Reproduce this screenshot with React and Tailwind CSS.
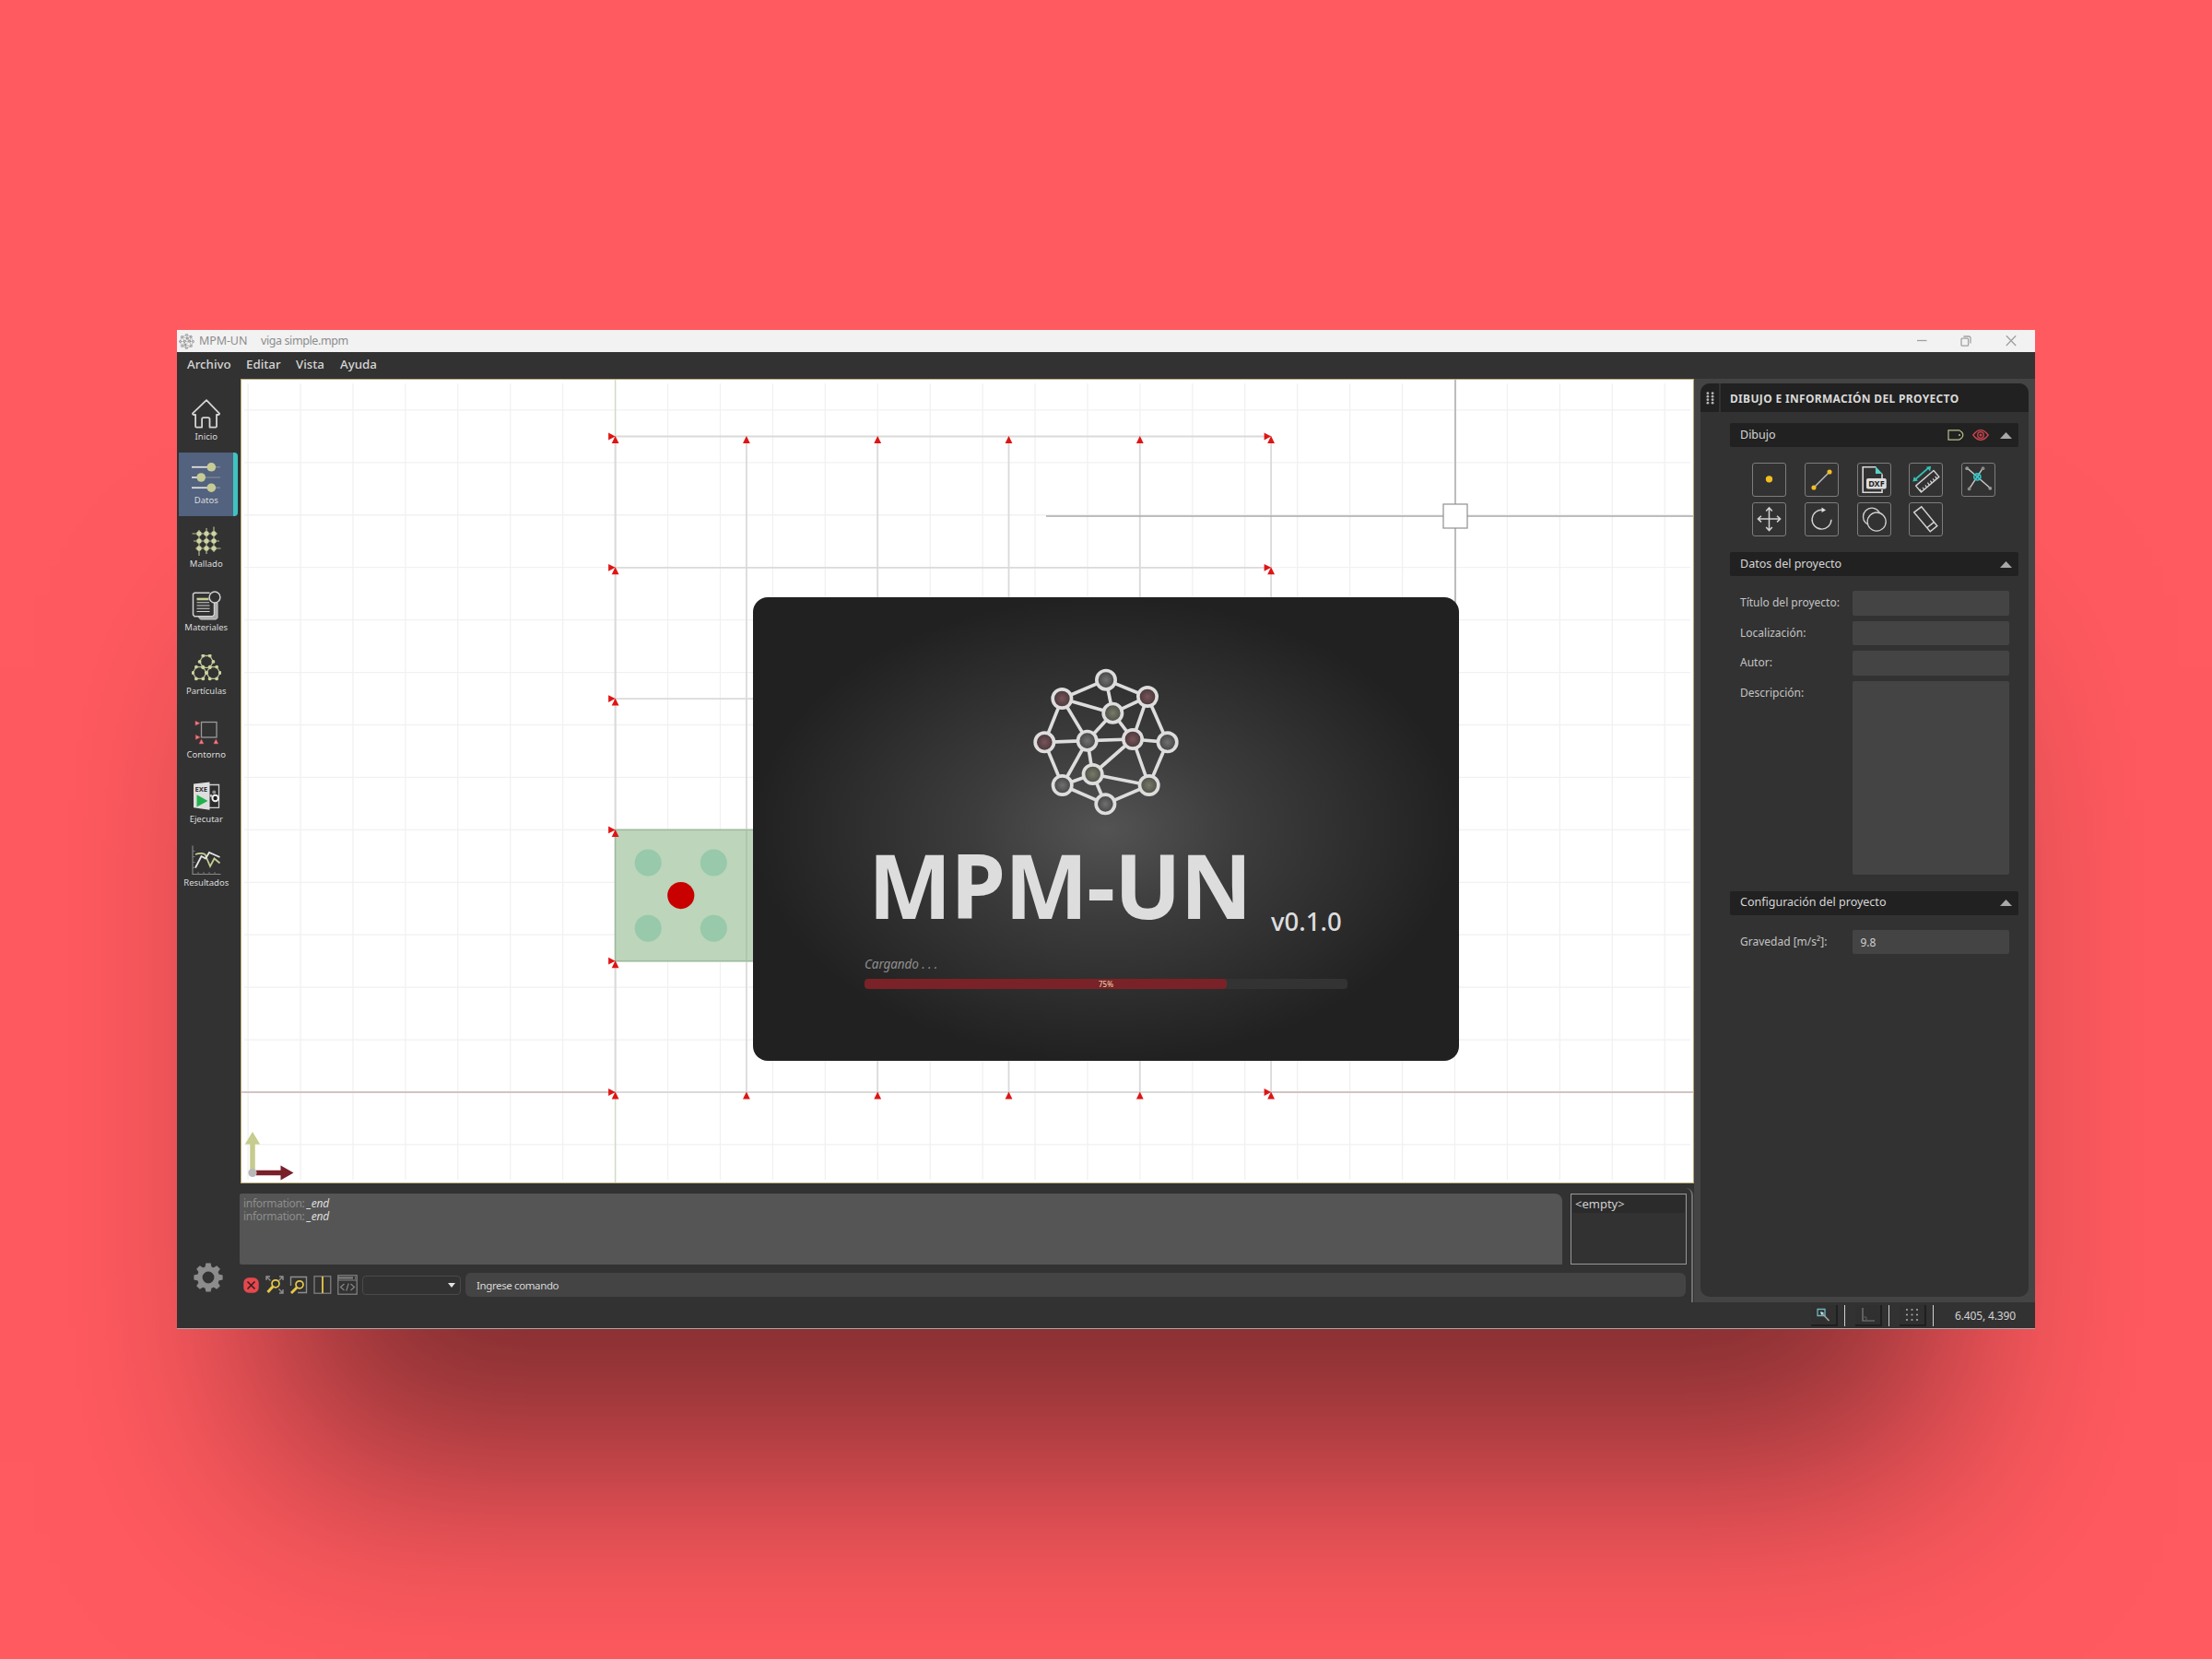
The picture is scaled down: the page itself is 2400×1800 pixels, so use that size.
import React from "react";

const X0 = 667.6 - 262;
const Y0 = 1185 - 412;
const MINOR = 56.93;
const MAJOR = 142.3;

const LOGO_NODES = {
  t: [300, 83, "g"],
  ur: [435, 138, "r"],
  r: [500, 286, "g"],
  br: [440, 426, "y"],
  b: [298, 487, "g"],
  bl: [158, 426, "g"],
  l: [100, 286, "r"],
  ul: [157, 144, "r"],
  a: [322, 191, "y"],
  c: [239, 281, "g"],
  d: [387, 276, "r"],
  e: [257, 390, "y"],
};
const LOGO_EDGES = [
  "t-ul", "t-ur", "ur-r", "r-br", "br-b", "b-bl", "bl-l", "l-ul", "t-a", "ul-a", "a-ur", "ul-c", "a-c",
  "a-d", "ur-d", "l-c", "c-d", "d-r", "c-bl", "c-e", "d-e", "d-br", "e-bl", "e-br", "e-b",
];

function Logo({ className, line, gray, red, olive, center }) {
  const fills = { g: gray, r: red, y: olive };
  const id = `${gray.slice(1)}glow`;
  return (
    <svg viewBox="60 45 480 480" className={className}>
      <defs>
        {Object.entries(fills).map(([k, f]) => (
          <radialGradient key={k} id={id + k}>
            <stop offset="0" stopColor={center[k]} />
            <stop offset="1" stopColor={f} />
          </radialGradient>
        ))}
      </defs>
      {LOGO_EDGES.map((e) => {
        const [p, q] = e.split("-").map((k) => LOGO_NODES[k]);
        return <line key={e} x1={p[0]} y1={p[1]} x2={q[0]} y2={q[1]} stroke={line} strokeWidth="11" />;
      })}
      {Object.entries(LOGO_NODES).map(([k, [x, y, f]]) => (
        <circle key={k} cx={x} cy={y} r="30.5" fill={`url(#${id + f})`} stroke={line} strokeWidth="11" />
      ))}
    </svg>
  );
}

function TitleBar() {
  return (
    <div className="flex h-6 items-center bg-[#f2f2f2] text-[12.5px] text-[#8c8c8c]">
      <Logo
        className="ml-[2px] size-[17px]"
        line="#666666"
        gray="#b4b4b3"
        red="#a9a9a8"
        olive="#acaca6"
        center={{ g: "#dddddd", r: "#cccccc", y: "#cccccc" }}
      />
      <span className="ml-[5px] w-[67px] tracking-[-0.1px]">MPM-UN</span>
      <span className="tracking-[-0.4px]">viga simple.mpm</span>
      <div className="ml-auto flex items-center pr-[20px] text-[#a0a0a0]">
        <svg viewBox="0 0 12 12" className="mr-[36px] size-[12px]" fill="none" stroke="currentColor" strokeWidth="1.3">
          <path d="M1 5.5h10.5" />
        </svg>
        <svg viewBox="0 0 12 12" className="mr-[37px] size-[12px]" fill="none" stroke="currentColor" strokeWidth="1.3">
          <rect x="1" y="3.2" width="7.6" height="8" rx="1" />
          <path d="M3.4 1H9a2 2 0 0 1 2 2v5.6" />
        </svg>
        <svg viewBox="0 0 12 12" className="size-[12px]" fill="none" stroke="currentColor" strokeWidth="1.3">
          <path d="M.8.2l10.400 10.800M11.200.2L.8 11" />
        </svg>
      </div>
    </div>
  );
}

function MenuBar() {
  return (
    <div className="flex h-[29px] items-start bg-[#323232] pl-[11px] pt-[3px] text-[13.3px] leading-5 font-medium text-[#d6d6d6]">
      <span className="w-[64px]">Archivo</span>
      <span className="w-[54px]">Editar</span>
      <span className="w-[48px]">Vista</span>
      <span>Ayuda</span>
    </div>
  );
}

function HomeIcon() {
  return (
    <svg viewBox="0 0 32 32" className="size-8" fill="none" stroke="#d4d4d4" strokeWidth="1.8" strokeLinejoin="round">
      <path d="M16 1.2L1.2 15.4c-.5.6 0 1.6.9 1.6h2v12.6c0 .6.4 1 1 1h6V21.8c0-1 .6-1.6 1.6-1.6h5.200c1 0 1.600.6 1.600 1.600v8.800h6.500c.6 0 1-.4 1-1V17h2c.9 0 1.400-1 .8-1.600z" />
    </svg>
  );
}

function SlidersIcon() {
  return (
    <svg viewBox="0 0 32 32" className="size-8">
      {[[4.8, 21.3], [16, 10.2], [27.200, 21.3]].map(([y, x]) => (
        <g key={y}>
          <path d={`M0 ${y}H${x}`} stroke="#dedede" strokeWidth="1.800" />
          <path d={`M${x} ${y}H31`} stroke="#7c8590" strokeWidth="1.4" />
          <circle cx={x} cy={y} r="4.8" fill="#c6cc94" />
        </g>
      ))}
    </svg>
  );
}

function MeshIcon() {
  const c = [8, 16, 24];
  return (
    <svg viewBox="0 0 32 32" className="size-8">
      <g stroke="#b4b890" strokeWidth="1.2">
        <path d="M.5 8H28M2 16h28M4 24h27.500M8 4v28M16 2v28M24 .5V28" />
      </g>
      {c.map((x) => c.map((y) => <circle key={`${x}-${y}`} cx={x} cy={y} r="2.7" fill="#ced3a2" />))}
    </svg>
  );
}

function MaterialsIcon() {
  return (
    <svg viewBox="0 0 32 32" className="size-8" fill="none" stroke="#d0d0d0" strokeWidth="1.5">
      <path d="M24.500 12l3.500 1v16.500l-1.500 1.500H9.500l-3-3.500" fill="#a9a9a9" strokeWidth="1" />
      <path d="M19.500 2.200H3L1.500 3.600V26L3 27.700h19.500l2-1.700V12.800" fill="#323232" />
      <path d="M5.500 9h13" stroke="#c6cc94" strokeWidth="2.600" />
      <path d="M5.500 12.800h13.500M5.500 16h14M5.500 19.300h14M5.500 22.500h14" strokeWidth="1.100" />
      <circle cx="25" cy="7" r="5.900" fill="#323232" />
    </svg>
  );
}

function ParticlesIcon() {
  const hex = (cx, cy) => [0, 60, 120, 180, 240, 300].map((a) => [cx + 7.400 * Math.cos((a * Math.PI) / 180), cy + 7.400 * Math.sin((a * Math.PI) / 180)]);
  return (
    <svg viewBox="0 0 32 32" className="size-8">
      {[[16, 7.900], [8.600, 20], [23.400, 20]].map(([x, y]) => (
        <g key={x}>
          <polygon points={hex(x, y).map((p) => p.join(",")).join(" ")} fill="none" stroke="#b9be8c" strokeWidth="1.300" />
          {hex(x, y).map((p, i) => (
            <circle key={i} cx={p[0]} cy={p[1]} r="1.900" fill="#cdd2a0" />
          ))}
        </g>
      ))}
    </svg>
  );
}

function BoundaryIcon() {
  return (
    <svg viewBox="0 0 32 32" className="size-8 overflow-visible" fill="none">
      <g transform="translate(0 -.5)">
        <rect x="10.500" y="5" width="16.500" height="16.500" stroke="#9a9a9a" strokeWidth="1.300" />
        <g fill="#e08a90" stroke="#d0454d" strokeWidth=".7">
          <path d="M4 3.800l4.800 2.400L4 8.600zM4.300 19l4.800 2.400-4.800 2.400zM10.500 23.600l2.400 4.800H8.100zM26.300 23.600l2.400 4.800h-4.800z" />
        </g>
      </g>
    </svg>
  );
}

function RunIcon() {
  return (
    <svg viewBox="0 0 32 32" className="size-8">
      <path d="M16 3.500h13.500v24.800H16" fill="#2c2c2c" stroke="#cfcfcf" strokeWidth="1.300" />
      <path d="M2 2.400L19.500.6v30.200L2 28.200z" fill="#dedede" />
      <text x="3.400" y="11.400" fontSize="7.600" fontWeight="700" fontFamily="Noto Sans, sans-serif" fill="#333" textLength="13.600" lengthAdjust="spacingAndGlyphs">
        EXE
      </text>
      <path d="M5.500 14.200L17.500 21 5.500 27.600z" fill="#22b14c" />
      <circle cx="24.300" cy="11.500" r="2" fill="#8f8f8f" />
      <circle cx="21" cy="15.300" r="1.500" fill="#bbb" />
      <circle cx="25.600" cy="18" r="3.200" fill="#1d1d1d" stroke="#f0f0f0" strokeWidth="2" />
    </svg>
  );
}

function ResultsIcon() {
  return (
    <svg viewBox="0 0 32 32" className="size-8" fill="none">
      <path d="M1 .5V31.500H31.500" stroke="#8a8a8a" strokeWidth="1.100" />
      <path d="M1 6.500h2.500M1 12.500h2.500M1 18.500h2.500M1 24.500h2.500M7 31.500V29M13 31.500V29M19 31.500V29M25 31.500V29" stroke="#777" />
      <path d="M4 10c4-1.500 8-1.500 10.500 0l5.500 13 4.500-8.500 6 5" stroke="#c6cc94" strokeWidth="1.800" />
      <path d="M4 24.500L10.500 12l4.500 2.500 4-6.500 11.500 5" stroke="#e4e4e4" strokeWidth="1.800" />
    </svg>
  );
}

const NAV = [
  ["Inicio", HomeIcon],
  ["Datos", SlidersIcon],
  ["Mallado", MeshIcon],
  ["Materiales", MaterialsIcon],
  ["Partículas", ParticlesIcon],
  ["Contorno", BoundaryIcon],
  ["Ejecutar", RunIcon],
  ["Resultados", ResultsIcon],
];

function GearIcon() {
  return (
    <svg viewBox="-16 -16 32 32" className="size-8">
      {[0, 45, 90, 135, 180, 225, 270, 315].map((a) => (
        <path key={a} d="M-3.800 -10L-2.600 -15.600H2.600L3.800 -10z" transform={`rotate(${a})`} fill="#8c8c8c" />
      ))}
      <circle r="9.200" fill="none" stroke="#8c8c8c" strokeWidth="5.600" />
    </svg>
  );
}

function Sidebar() {
  return (
    <div className="flex w-[69px] shrink-0 flex-col pt-[11px] pl-[2px]">
      {NAV.map(([label, Icon], i) => (
        <div
          key={label}
          className={
            "flex h-[69.2px] w-[63.5px] shrink-0 flex-col items-center border-r-[5.5px] pt-[11px] pl-px " +
            (i === 1 ? "rounded-r-sm border-[#3fc3c1] bg-[#52627f]" : "border-transparent")
          }
        >
          <Icon />
          <span className="mt-[2.5px] text-[9.5px] leading-3 whitespace-nowrap text-[#dcdcdc]">{label}</span>
        </div>
      ))}
      <div className="mt-auto mb-[11px] ml-4">
        <GearIcon />
      </div>
    </div>
  );
}

function Support({ x, y, corner }) {
  return (
    <g fill="#e01414">
      <path d={`M${x} ${y - 0.5}l3.900 8h-7.800z`} />
      {corner && <path d={`M${x} ${y}l-7.500 -3.900v7.800z`} />}
    </g>
  );
}

function Canvas() {
  const vs = [];
  for (let x = X0 - 7 * MINOR; x < 1576; x += MINOR) vs.push(x);
  const hs = [];
  for (let y = Y0 - 13 * MINOR; y < 872; y += MINOR) hs.push(y);
  const n = [0, 1, 2, 3, 4, 5];
  const R = X0 + 5 * MAJOR;
  const T = Y0 - 5 * MAJOR;
  return (
    <div className="h-[873px] w-[1577px] border border-[#b9ad7c] bg-white">
      <svg viewBox="0 0 1575 871" className="block h-full w-full">
        <g stroke="#f1f1f1" strokeWidth="1.300">
          {vs.map((x) => <path key={x} d={`M${x} 4V868`} />)}
          {hs.map((y) => <path key={y} d={`M3 ${y}H1572`} />)}
        </g>
        <path d={`M${X0} 0V872`} stroke="#cfdcc4" strokeWidth="1.500" />
        <path d={`M0 ${Y0}H1575`} stroke="#c6b4b4" strokeWidth="1.500" />
        <g stroke="#dadada" strokeWidth="1.800">
          {n.map((i) => <path key={`v${i}`} d={`M${X0 + i * MAJOR} ${T}V${Y0}`} />)}
          {n.map((i) => <path key={`h${i}`} d={`M${X0} ${Y0 - i * MAJOR}H${R}`} />)}
        </g>
        <rect x={X0} y={Y0 - 2 * MAJOR} width={MAJOR * 5} height={MAJOR} fill="#bcd5bb" stroke="#9dbb9d" strokeWidth="1.500" />
        <path d={`M${X0 + MAJOR} ${Y0 - 2 * MAJOR}v${MAJOR}`} stroke="#a9c3a8" strokeWidth="1.500" />
        {[0.25, 0.75].map((a) =>
          [1.25, 1.75].map((b) => (
            <circle key={`${a}${b}`} cx={X0 + a * MAJOR} cy={Y0 - b * MAJOR} r="14.500" fill="#97c9aa" />
          ))
        )}
        <circle cx={X0 + MAJOR / 2} cy={Y0 - 1.500 * MAJOR} r="14.600" fill="#c80000" />
        <g>
          {n.map((i) => <Support key={`t${i}`} x={X0 + i * MAJOR} y={T} corner={i === 0 || i === 5} />)}
          {n.map((i) => <Support key={`b${i}`} x={X0 + i * MAJOR} y={Y0} corner={i === 0 || i === 5} />)}
          {[1, 2, 3, 4].map((i) => <Support key={`l${i}`} x={X0} y={Y0 - i * MAJOR} corner />)}
          {[1, 2, 3, 4].map((i) => <Support key={`r${i}`} x={R} y={Y0 - i * MAJOR} corner />)}
        </g>
        <path d="M1317 0V592M873 148H1575" stroke="#a9a9a9" strokeWidth="1.500" />
        <rect x="1304" y="135" width="26" height="26" fill="#fff" stroke="#8f8f8f" strokeWidth="1.200" />
        <path d="M12 860V829" stroke="#c6cb8e" strokeWidth="5.500" />
        <path d="M12 816l8.200 13.500H3.800z" fill="#c6cb8e" />
        <path d="M16 860.500H43" stroke="#79202a" strokeWidth="5.500" />
        <path d="M56.500 860.500L42.500 852.500v16z" fill="#79202a" />
        <circle cx="12" cy="860.500" r="4.600" fill="#b9b9b9" />
      </svg>
    </div>
  );
}

function CommandArea() {
  return (
    <div className="mt-[5px] -ml-px flex w-[1577px] flex-1 flex-col rounded-tr-lg border-r-2 border-[#6e6e6e]">
      <div className="mt-[6px] flex h-[77px] gap-[9px]">
        <div className="w-[1435px] shrink-0 rounded-l-xs rounded-tr-lg bg-[#555555] px-[4px] pt-[4px] text-[12px] leading-[14px] text-[#8d8d8d]">
          {[0, 1].map((i) => (
            <div key={i} className="tracking-[-0.3px]">
              information: <span className="text-[#dddddd] italic">_end</span>
            </div>
          ))}
        </div>
        <div className="w-[126px] shrink-0 border border-[#979797] p-px">
          <div className="h-[19px] bg-[#2b2b2b] pl-[3px] text-[13px] leading-[19px] text-[#d0d0d0]">&lt;empty&gt;</div>
        </div>
      </div>
      <div className="mt-[9px] flex h-[26px] items-center pl-[4px]">
        <svg viewBox="0 0 17 17" className="size-[17px]">
          <rect x=".3" y=".3" width="16.400" height="16.400" rx="5.500" fill="#e5484d" />
          <path d="M4.500 4.500l8 8M12.500 4.500l-8 8" stroke="#3a2020" strokeWidth="1.700" />
        </svg>
        <svg viewBox="0 0 20 20" className="ml-[7px] size-5" fill="none">
          <path d="M1 5V1h4M1.500 1.500l4 4M15 1h4v4M18.500 1.500l-4 4M19 15v4h-4M18.500 18.500l-4-4" stroke="#8f8f8f" strokeWidth="1.400" />
          <circle cx="11" cy="8.800" r="4" stroke="#e8c84a" strokeWidth="1.700" />
          <path d="M8.200 11.800L2.500 18" stroke="#e8c84a" strokeWidth="3" />
        </svg>
        <svg viewBox="0 0 20 20" className="ml-[6px] size-5" fill="none">
          <path d="M1.500 11V1.500h17v17H9" stroke="#8f8f8f" strokeWidth="1.400" />
          <circle cx="11" cy="9.800" r="4" stroke="#e8c84a" strokeWidth="1.700" />
          <path d="M8 13L2 19" stroke="#e8c84a" strokeWidth="2.800" />
        </svg>
        <svg viewBox="0 0 20 20" className="ml-[6px] size-5" fill="none">
          <rect x="1" y=".8" width="17.800" height="18.400" stroke="#858585" strokeWidth="1.200" />
          <path d="M10 1v18" stroke="#e8c84a" strokeWidth="1.800" />
        </svg>
        <svg viewBox="0 0 22 22" className="ml-[5.5px] size-[22px]" fill="none" stroke="#858585" strokeWidth="1.200">
          <rect x=".8" y=".8" width="20.400" height="20.400" />
          <path d="M1 3.500h16M19 3.500h1" strokeWidth="1.800" />
          <path d="M1 6h20M7.500 10l-4 3.500 4 3.500M14.500 10l4 3.500-4 3.500M12.200 9.500l-2.400 8" />
        </svg>
        <div className="ml-[5px] flex h-[21px] w-[107px] items-center justify-end rounded-sm border border-[#4a4a4a] pr-[5px]">
          <svg viewBox="0 0 8 5" className="h-[5px] w-2">
            <path d="M0 0h8L4 5z" fill="#e4e4e4" />
          </svg>
        </div>
        <div className="ml-[5px] h-[26px] w-[1324px] shrink-0 rounded-md bg-[#444444] pl-[12.5px] text-[11.500px] leading-[27px] tracking-[-0.38px] text-[#d8d8d8]">
          Ingrese comando
        </div>
      </div>
    </div>
  );
}

function Triangle() {
  return (
    <svg viewBox="0 0 13 7" className="h-[7px] w-[13px]">
      <path d="M6.500 0L13 7H0z" fill="#a9a9a9" />
    </svg>
  );
}

function SectionHeader({ title, children }) {
  return (
    <div className="flex h-[26px] w-[313px] items-center rounded-xs bg-[#212121] pr-[7px] pl-[11px] text-[12.500px] text-[#d6d6d6]">
      <span>{title}</span>
      <div className="ml-auto flex items-center">
        {children}
        <Triangle />
      </div>
    </div>
  );
}

const TOOLS = [
  <g key="point">
    <circle cx="18.500" cy="17.800" r="3.900" fill="#f2bf20" />
  </g>,
  <g key="line">
    <path d="M9.500 27.500L27.500 9.500" stroke="#bdbdbd" strokeWidth="1.500" />
    <circle cx="9.500" cy="27.500" r="2.700" fill="#f2bf20" />
    <circle cx="27.500" cy="9.500" r="2.700" fill="#f2bf20" />
  </g>,
  <g key="dxf">
    <path d="M20.500 4H5.500v29h22v-3.500M27.500 17V12" stroke="#d8d8d8" strokeWidth="1.700" />
    <path d="M20 3.200l8 8.300h-8z" fill="#56d3c6" />
    <rect x="9.500" y="16.800" width="23" height="12.200" rx="2" fill="#dedede" />
    <text x="11.800" y="26.200" fontSize="9" fontWeight="700" fontFamily="Noto Sans, sans-serif" fill="#222" textLength="18.500" lengthAdjust="spacingAndGlyphs">
      DXF
    </text>
  </g>,
  <g key="measure">
    <path d="M6 18.500L22 4.500" stroke="#32c3b9" strokeWidth="1.800" />
    <path d="M3.500 20.500l1.500-5.500 4.500 4.500zM24.500 3l-5.600 1 4.500 4.600z" fill="#32c3b9" />
    <path d="M7 25.500L27.500 8l6.200 7.200-20.500 17.500z" stroke="#d2d2d2" strokeWidth="1.500" strokeLinejoin="round" />
    <path d="M13.500 32l-2-2.600M16.500 29.500l-1.700-2.200M19.500 27l-1.700-2.200M22.500 24.400l-2-2.600M25.300 22l-1.700-2.200M28.200 19.600l-1.700-2.200M31 17l-1.700-2.200" stroke="#d2d2d2" strokeWidth="1.300" />
  </g>,
  <g key="intersect">
    <path d="M5.500 5L32 28M23.500 5.500L8 29" stroke="#c4c4c4" strokeWidth="1.600" />
    <circle cx="5.500" cy="5.500" r="2" fill="#9a9a9a" />
    <circle cx="23.800" cy="5.500" r="2" fill="#8a8a8a" />
    <circle cx="8" cy="29" r="2" fill="#8a8a8a" />
    <circle cx="32" cy="28.300" r="2" fill="#9a9a9a" />
    <circle cx="17.300" cy="15.300" r="3.800" stroke="#32c3c6" strokeWidth="1.700" />
    <path d="M14.500 12.500l5.500 5.500M20 12.500l-5 6" stroke="#32c3c6" strokeWidth="1.700" />
  </g>,
  <g key="move" stroke="#d2d2d2" strokeWidth="1.600">
    <path d="M18.500 5.500v26M6 18h25.500M15 9l3.500-3.800L22 9M15 27.500l3.500 3.800 3.500-3.800M9.500 14.500L5.700 18l3.800 3.500M27.500 14.500l3.800 3.500-3.800 3.500" />
  </g>,
  <g key="rotate">
    <path d="M20 7.800A11 11 0 1 0 29.500 18.800" stroke="#d2d2d2" strokeWidth="1.500" />
    <path d="M18.500 4.800l4.800 3.200-4.800 2.600z" fill="#e0e0e0" />
  </g>,
  <g key="offset" stroke="#d2d2d2" strokeWidth="1.400">
    <circle cx="15.800" cy="15.500" r="10" />
    <circle cx="21.300" cy="21.200" r="10.600" fill="#323232" />
  </g>,
  <g key="erase" stroke="#d2d2d2" strokeWidth="1.600">
    <path d="M5 10.500l8.500-6.500L31.500 26l-8 6.500zM20 28l8-6.500" />
  </g>,
];

const Input = ({ tall, value }) => (
  <div
    className={
      "w-[170px] rounded-xs bg-[#444444] pl-[9px] text-[12px] leading-[27px] text-[#d0d0d0] " + (tall ? "h-[210px]" : "h-[26.500px]")
    }
  >
    {value}
  </div>
);

function Field({ label, tall, value }) {
  return (
    <div className="flex">
      <div className="w-[121.5px] shrink-0 text-[12px] leading-[26px] whitespace-nowrap text-[#c4c4c4]">{label}</div>
      <Input tall={tall} value={value} />
    </div>
  );
}

function SidePanel() {
  return (
    <div className="mt-[5px] ml-[7px] h-[991px] w-[356px] rounded-[10px] bg-[#323232]">
      <div className="flex h-[31px] gap-[2px] overflow-hidden rounded-t-[10px]">
        <div className="grid w-5 place-items-center bg-[#212121]">
          <svg viewBox="0 0 9 14" className="h-[14px] w-[9px]" fill="#b4b4b4">
            {[1.900, 7.100].map((x) => [1.700, 5.200, 8.700, 12.200].map((y) => <circle key={`${x}${y}`} cx={x} cy={y} r="1.400" />))}
          </svg>
        </div>
        <div className="flex-1 bg-[#212121] pl-[10px] text-[12px] leading-[33px] font-bold tracking-[0.33px] whitespace-nowrap text-[#dadada]">
          DIBUJO E INFORMACIÓN DEL PROYECTO
        </div>
      </div>
      <div className="flex flex-col pl-[32px]">
        <div className="mt-[12px]">
          <SectionHeader title="Dibujo">
            <svg viewBox="0 0 18 12" className="mr-[9px] h-3 w-[18px]" fill="none" stroke="#b9be8c" strokeWidth="1.200">
              <path d="M1 .8h11.500Q16.800 3 16.800 6t-4.300 5.200H1z" />
              <circle cx="13" cy="6" r="1" fill="#b9be8c" stroke="none" />
            </svg>
            <svg viewBox="0 0 18 12" className="mr-[12px] h-3 w-[18px]" fill="none" stroke="#d0454d" strokeWidth="1.300">
              <path d="M.8 6Q9-4.800 17.200 6 9 16.800.8 6z" />
              <circle cx="9" cy="6" r="3.300" />
              <circle cx="9" cy="6" r=".9" />
            </svg>
          </SectionHeader>
        </div>
        <div className="mt-[17px] ml-[24px] grid w-[284px] grid-cols-5 gap-y-[6px]">
          {TOOLS.map((t) => (
            <svg key={t.key} viewBox="0 0 37 37" className="size-[37px] rounded-[3px] border border-[#7d7d7d]" fill="none">
              {t}
            </svg>
          ))}
        </div>
        <div className="mt-[17px]">
          <SectionHeader title="Datos del proyecto" />
        </div>
        <div className="mt-[16px] ml-[11px] flex flex-col gap-[6px]">
          <Field label="Título del proyecto:" />
          <Field label="Localización:" />
          <Field label="Autor:" />
          <Field label="Descripción:" tall />
        </div>
        <div className="mt-[18px]">
          <SectionHeader title="Configuración del proyecto" />
        </div>
        <div className="mt-[16px] ml-[11px]">
          <Field label="Gravedad [m/s²]:" value="9.8" />
        </div>
      </div>
    </div>
  );
}

function StatusButton({ children }) {
  return (
    <div className="grid h-[23px] w-[29px] place-items-center border-r-2 border-b-2 border-[#1f1f1f] bg-[#303030]">
      <svg viewBox="0 0 15 15" className="size-[15px]" fill="none">
        {children}
      </svg>
    </div>
  );
}

const Divider = () => <div className="mr-[11px] ml-[7px] h-[23px] w-px bg-[#d0d0d0]" />;

function StatusBar() {
  return (
    <div className="flex h-[29px] items-center justify-end border-b border-[#a9a9a9] bg-[#323232] pt-px pr-[22px]">
      <StatusButton>
        <path d="M1 1.500h8v7H1z" stroke="#6fb5c0" strokeWidth="1.300" />
        <path d="M5 5l8.500 9" stroke="#a5a5a5" strokeWidth="1.600" />
        <path d="M4 4l4 1.200L5.200 8z" fill="#bfe3e6" />
      </StatusButton>
      <Divider />
      <StatusButton>
        <path d="M2 0v14h13" stroke="#7f7f7f" strokeWidth="1.200" />
        <path d="M2 10h4v4" stroke="#5f5f5f" />
      </StatusButton>
      <Divider />
      <StatusButton>
        {[2, 7.500, 13].map((x) => [2, 7.500, 13].map((y) => <circle key={`${x}${y}`} cx={x} cy={y} r="1.100" fill="#a5a5a5" />))}
      </StatusButton>
      <Divider />
      <span className="ml-[12px] w-[65px] text-[12px] tracking-[-0.15px] whitespace-nowrap text-[#d4d4d4]">6.405, 4.390</span>
    </div>
  );
}

function Splash() {
  return (
    <div className="absolute top-[290px] left-[625px] flex h-[503px] w-[766px] flex-col rounded-2xl bg-[radial-gradient(closest-side,#535353,#3c3c3c_38%,#212121)] pt-[77px] pl-[121px]">
      <Logo
        className="ml-[182px] size-[160px]"
        line="#dddddd"
        gray="#424242"
        red="#473437"
        olive="#4c4d43"
        center={{ g: "#707070", r: "#75555a", y: "#777a6a" }}
      />
      <div className="mt-[20px] flex h-[110px] items-end text-[#dddddd]">
        <div className="w-[441px] pl-[4px] text-[96px] leading-[110px] font-bold tracking-[-1.1px] whitespace-nowrap">MPM-UN</div>
        <div className="mb-[-3px] text-[27.500px] leading-9 font-medium whitespace-nowrap">v0.1.0</div>
      </div>
      <div className="mt-[21px] text-[13.500px] leading-5 tracking-[-0.1px] text-[#8f8f8f] italic">Cargando . . .</div>
      <div className="mt-[6px] grid h-[11px] w-[524px] overflow-hidden rounded-sm bg-[#333333]">
        <div className="col-start-1 row-start-1 w-3/4 rounded-sm bg-[#7a2227]" />
        <div className="col-start-1 row-start-1 text-center text-[8px] leading-[11px] font-medium text-[#e2c9a4]">75%</div>
      </div>
    </div>
  );
}

export default function App() {
  return (
    <div className="h-[1800px] w-[2400px] overflow-hidden bg-[#ff5a5f] pt-[358px] pl-[192px] font-['Noto_Sans',sans-serif]">
      <div className="relative flex h-[1084px] w-[2016px] flex-col bg-[#323232] shadow-[0_255px_220px_-112px_rgba(0,0,0,0.5)]">
        <TitleBar />
        <MenuBar />
        <div className="flex h-[1002px]">
          <Sidebar />
          <div className="flex w-[1577px] flex-col">
            <Canvas />
            <CommandArea />
          </div>
          <div className="flex-1 bg-[#444444]">
            <SidePanel />
          </div>
        </div>
        <StatusBar />
        <Splash />
      </div>
    </div>
  );
}
